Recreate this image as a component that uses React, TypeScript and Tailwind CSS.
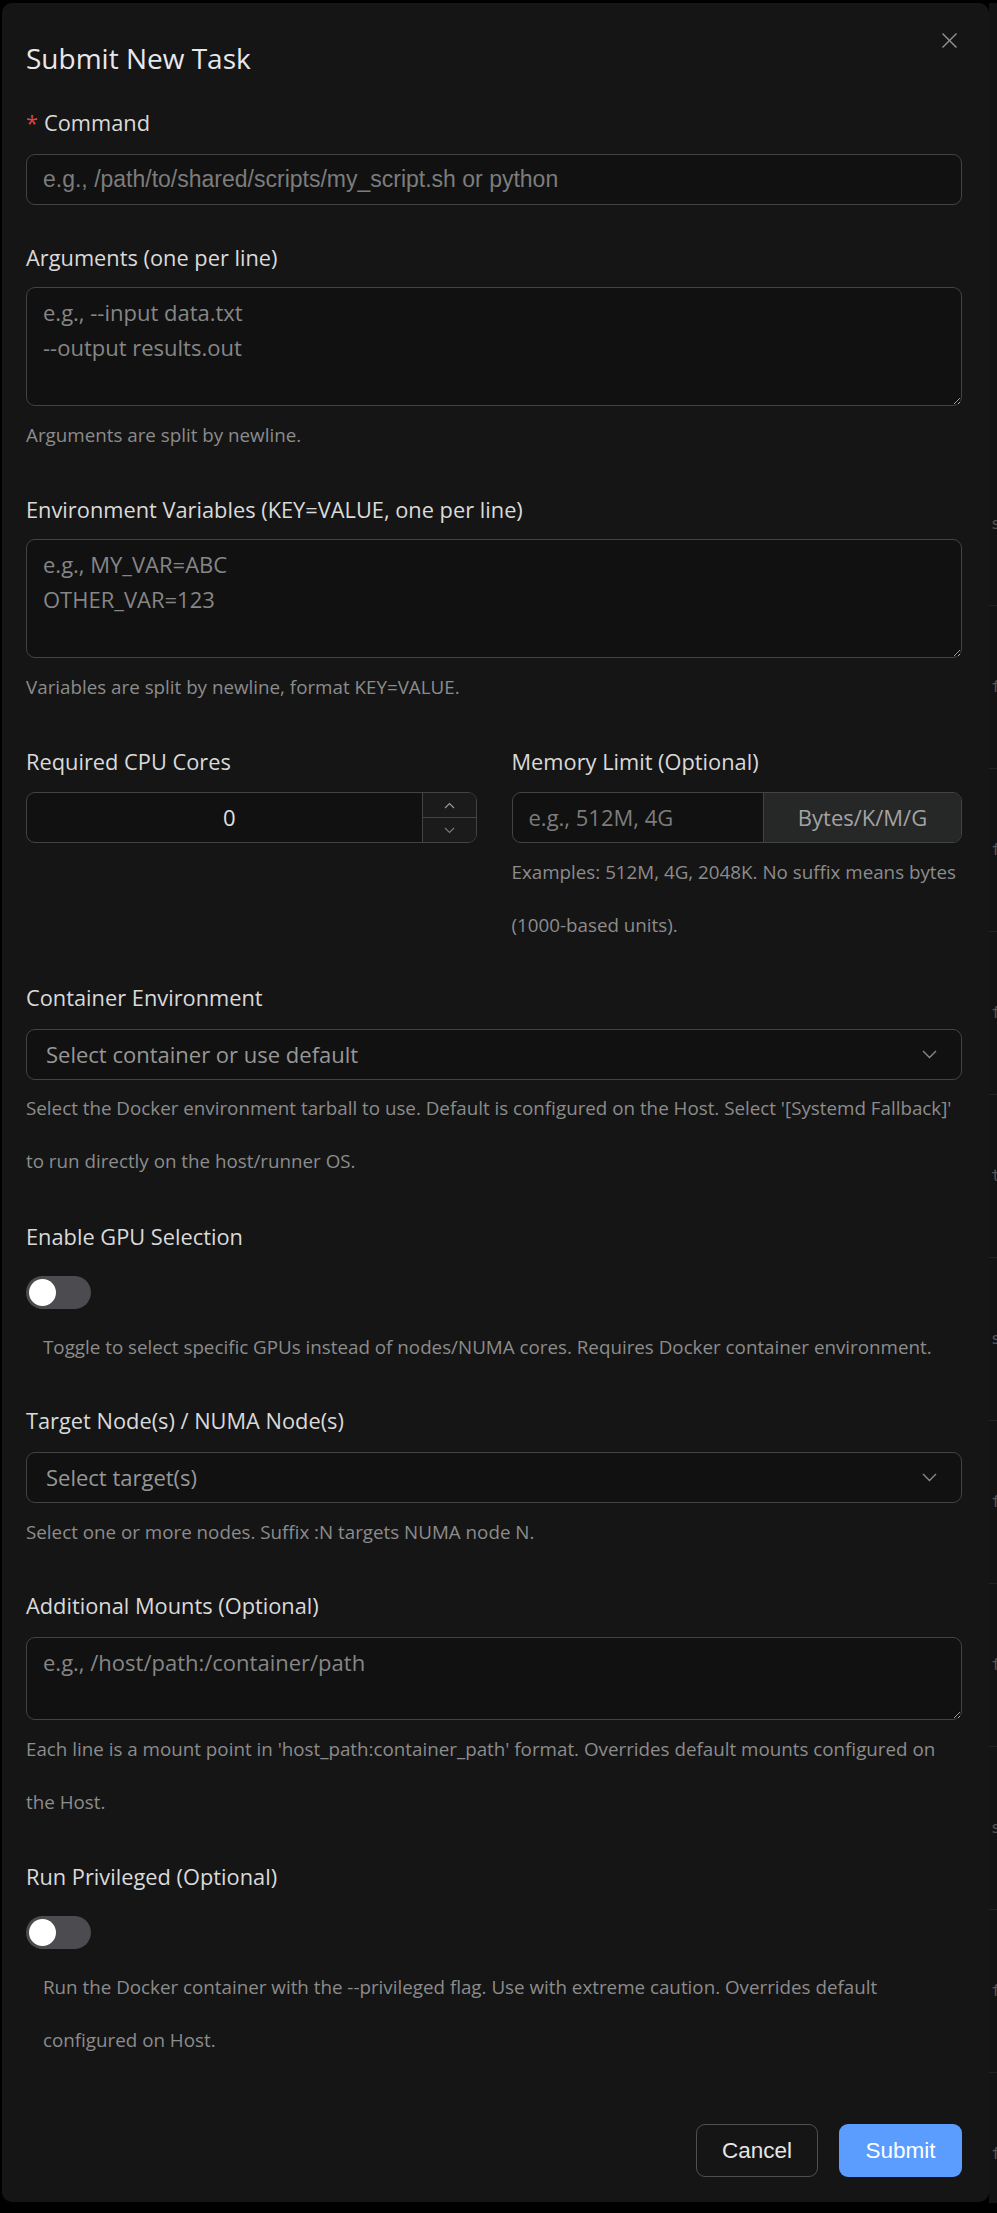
import React from "react";

const labelCls = "block text-[21.8px] leading-[30px] text-[#dadada]";
const helperCls = "text-[18.8px] leading-[53px] text-[#8c8c8c]";
const boxCls = "rounded-[9px] border border-[#434343] bg-[#111111]";

function Chevron() {
  return (
    <svg width="15" height="9" viewBox="0 0 15 9" fill="none">
      <polyline points="1,1 7.5,7.5 14,1" stroke="#8c8c8c" strokeWidth="1.3" />
    </svg>
  );
}

function Switch() {
  return (
    <div className="flex h-[33px] w-[65px] items-center rounded-full bg-[#4c4c50] pl-[3px]">
      <div className="h-[27px] w-[27px] rounded-full bg-white" />
    </div>
  );
}

function BackgroundPage() {
  const rows = ["s", "f", "f", "f", "t", "s", "f", "f", "s", "f", "f"];
  return (
    <div className="ml-[989px] mt-[3px] flex h-[2200px] flex-col bg-[#131313] pt-[440px]">
      {rows.map((r, i) => (
        <div
          key={i}
          className="flex h-[163px] shrink-0 items-center border-b border-[#222] pl-[2px] font-['DejaVu_Sans_Mono',monospace] text-[16px] text-[#555]"
        >
          {r}
        </div>
      ))}
    </div>
  );
}

export default function App() {
  return (
    <div className="relative h-[2213px] w-[997px] overflow-hidden bg-black font-['Open_Sans',sans-serif] [color-scheme:dark]">
      <BackgroundPage />
      <div className="absolute left-[2px] top-[3px] flex h-[2199px] w-[987px] flex-col rounded-[10px] bg-[#151515] pl-[24px] pr-[27px] pt-[35px]">
        <button className="absolute right-[31px] top-[29px] flex h-[17px] w-[17px] items-center justify-center">
          <svg width="17" height="17" viewBox="0 0 17 17" fill="none">
            <line x1="1.5" y1="1.5" x2="15.5" y2="15.5" stroke="#8e8e8e" strokeWidth="1.5" />
            <line x1="15.5" y1="1.5" x2="1.5" y2="15.5" stroke="#8e8e8e" strokeWidth="1.5" />
          </svg>
        </button>

        <h2 className="text-[28px] leading-[40px] text-[#e6e8ee]">Submit New Task</h2>

        {/* Command */}
        <label className={`${labelCls} mt-[30px]`}>
          <span className="mr-[6px] text-[#dc4446]">*</span>Command
        </label>
        <input
          className={`${boxCls} mt-[16px] h-[51px] w-full px-[16px] font-['Liberation_Sans',Arial,sans-serif] text-[23px] text-[#dadada] outline-none placeholder:text-[#7c7c7c]`}
          placeholder="e.g., /path/to/shared/scripts/my_script.sh or python"
        />

        {/* Arguments */}
        <label className={`${labelCls} mt-[38px]`}>Arguments (one per line)</label>
        <textarea
          className={`${boxCls} mt-[14px] h-[119px] w-full px-[16px] pt-[7px] text-[22px] leading-[35px] text-[#dadada] outline-none placeholder:text-[#868686]`}
          placeholder={"e.g., --input data.txt\n--output results.out"}
        />
        <p className={`${helperCls} mt-[3px]`}>Arguments are split by newline.</p>

        {/* Env */}
        <label className={`${labelCls} mt-[33px]`}>Environment Variables (KEY=VALUE, one per line)</label>
        <textarea
          className={`${boxCls} mt-[14px] h-[119px] w-full px-[16px] pt-[7px] text-[22px] leading-[35px] text-[#dadada] outline-none placeholder:text-[#868686]`}
          placeholder={"e.g., MY_VAR=ABC\nOTHER_VAR=123"}
        />
        <p className={`${helperCls} mt-[3px]`}>Variables are split by newline, format KEY=VALUE.</p>

        {/* CPU / Memory */}
        <div className="mt-[33px] grid grid-cols-2 gap-x-[35px]">
          <div className="flex flex-col">
            <label className={labelCls}>Required CPU Cores</label>
            <div className={`${boxCls} mt-[15px] flex h-[51px] overflow-hidden`}>
              <div className="flex flex-1 items-center justify-center pl-[10px] text-[22px] text-[#e0e0e0]">0</div>
              <div className="flex w-[54px] flex-col border-l border-[#434343] bg-[#1b1b1b]">
                <div className="flex flex-1 items-center justify-center border-b border-[#434343]">
                  <svg width="11" height="7" viewBox="0 0 11 7" fill="none">
                    <polyline points="1,6 5.5,1.5 10,6" stroke="#9a9a9a" strokeWidth="1.1" />
                  </svg>
                </div>
                <div className="flex flex-1 items-center justify-center">
                  <svg width="11" height="7" viewBox="0 0 11 7" fill="none">
                    <polyline points="1,1 5.5,5.5 10,1" stroke="#7a7a7a" strokeWidth="1.1" />
                  </svg>
                </div>
              </div>
            </div>
          </div>
          <div className="flex flex-col">
            <label className={labelCls}>Memory Limit (Optional)</label>
            <div className={`${boxCls} mt-[15px] flex h-[51px] overflow-hidden`}>
              <input
                className="min-w-0 flex-1 bg-transparent px-[16px] text-[22px] text-[#dadada] outline-none placeholder:text-[#7c7c7c]"
                placeholder="e.g., 512M, 4G"
              />
              <div className="flex w-[198px] items-center justify-center border-l border-[#434343] bg-[#262727] text-[22px] text-[#a3a3a3]">
                Bytes/K/M/G
              </div>
            </div>
            <p className={`${helperCls} mt-[3px] whitespace-nowrap`}>
              Examples: 512M, 4G, 2048K. No suffix means bytes
              <br />
              (1000-based units).
            </p>
          </div>
        </div>

        {/* Container */}
        <label className={`${labelCls} mt-[31px]`}>Container Environment</label>
        <div className={`${boxCls} mt-[16px] flex h-[51px] items-center justify-between pl-[19px] pr-[24px]`}>
          <span className="text-[22px] text-[#979797]">Select container or use default</span>
          <Chevron />
        </div>
        <p className={`${helperCls} mt-[2px] whitespace-nowrap`}>
          Select the Docker environment tarball to use. Default is configured on the Host. Select &apos;[Systemd Fallback]&apos;
          <br />
          to run directly on the host/runner OS.
        </p>

        {/* GPU */}
        <label className={`${labelCls} mt-[34px]`}>Enable GPU Selection</label>
        <div className="mt-[24px]">
          <Switch />
        </div>
        <p className={`${helperCls} mt-[12px] pl-[17px] whitespace-nowrap`}>
          Toggle to select specific GPUs instead of nodes/NUMA cores. Requires Docker container environment.
        </p>

        {/* Target */}
        <label className={`${labelCls} mt-[32px]`}>Target Node(s) / NUMA Node(s)</label>
        <div className={`${boxCls} mt-[16px] flex h-[51px] items-center justify-between pl-[19px] pr-[24px]`}>
          <span className="text-[22px] text-[#979797]">Select target(s)</span>
          <Chevron />
        </div>
        <p className={`${helperCls} mt-[3px]`}>Select one or more nodes. Suffix :N targets NUMA node N.</p>

        {/* Mounts */}
        <label className={`${labelCls} mt-[32px]`}>Additional Mounts (Optional)</label>
        <textarea
          className={`${boxCls} mt-[16px] h-[83px] w-full px-[16px] pt-[7px] text-[22px] leading-[35px] text-[#dadada] outline-none placeholder:text-[#868686]`}
          placeholder="e.g., /host/path:/container/path"
        />
        <p className={`${helperCls} mt-[3px] whitespace-nowrap`}>
          Each line is a mount point in &apos;host_path:container_path&apos; format. Overrides default mounts configured on
          <br />
          the Host.
        </p>

        {/* Privileged */}
        <label className={`${labelCls} mt-[33px]`}>Run Privileged (Optional)</label>
        <div className="mt-[24px]">
          <Switch />
        </div>
        <p className={`${helperCls} mt-[12px] pl-[17px] whitespace-nowrap`}>
          Run the Docker container with the --privileged flag. Use with extreme caution. Overrides default
          <br />
          configured on Host.
        </p>

        {/* Footer */}
        <div className="mt-[57px] flex justify-end gap-[21px] font-['Liberation_Sans',Arial,sans-serif]">
          <button className="h-[53px] w-[122px] rounded-[9px] border border-[#4f4f4f] bg-transparent text-[22.5px] text-[#e6e6e6]">
            Cancel
          </button>
          <button className="h-[53px] w-[123px] rounded-[9px] bg-[#5b9dff] text-[22.5px] text-white">
            Submit
          </button>
        </div>
      </div>
    </div>
  );
}
